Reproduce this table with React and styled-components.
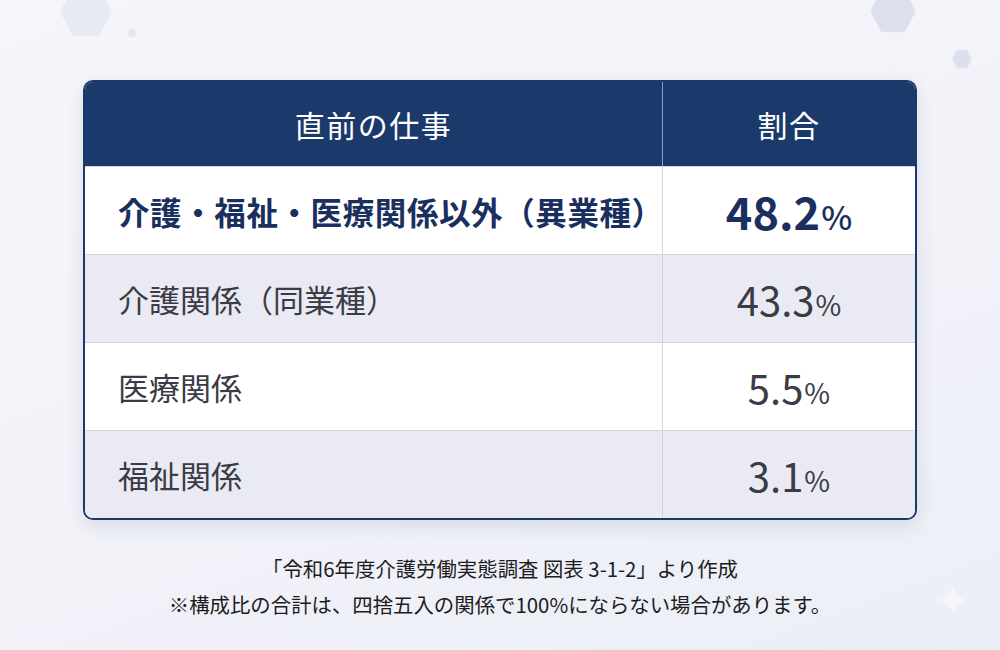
import styled, { createGlobalStyle } from 'styled-components';

const GlobalStyle = createGlobalStyle`
    html, body {
        margin: 0;
        padding: 0;
        width: 1000px;
        height: 650px;
        overflow: hidden;
    }
    body {
        font-family: "Noto Sans CJK JP", "Noto Sans", sans-serif;
        background: linear-gradient(160deg, #f6f6fa 0%, #f2f3f9 50%, #eceef6 100%);
    }
`;

const rows = [
    { label: '介護・福祉・医療関係以外（異業種）', value: '48.2', highlight: true },
    { label: '介護関係（同業種）', value: '43.3', shaded: true },
    { label: '医療関係', value: '5.5' },
    { label: '福祉関係', value: '3.1', shaded: true },
];

const App = () => {
    return (
        <Page>
            <GlobalStyle />
            <Blob $x={60} $y={-14} $size={52} $color="#e4e7f1" />
            <Blob $x={127} $y={28} $size={10} $color="#dfe1ea" />
            <Blob $x={870} $y={-12} $size={46} $color="#d9dcea" />
            <Blob $x={952} $y={49} $size={20} $color="#d8d9ec" />
            <Sparkle viewBox="0 0 40 40">
                <path d="M20 2 C22 14 26 18 38 20 C26 22 22 26 20 38 C18 26 14 22 2 20 C14 18 18 14 20 2 Z" fill="#f6f6fd" />
            </Sparkle>
            <Table>
                <HeadRow>
                    <HeadCell>直前の仕事</HeadCell>
                    <HeadCell $divider>割合</HeadCell>
                </HeadRow>
                {rows.map((row) => (
                    <Row key={row.label} $shaded={row.shaded}>
                        <Label $highlight={row.highlight}>{row.label}</Label>
                        <Value $highlight={row.highlight}>
                            {row.value}
                            <Percent $highlight={row.highlight}>%</Percent>
                        </Value>
                    </Row>
                ))}
            </Table>
            <Notes>
                <p>「令和6年度介護労働実態調査 図表 3-1-2」より作成</p>
                <p>※構成比の合計は、四捨五入の関係で100%にならない場合があります。</p>
            </Notes>
        </Page>
    );
};
export default App;


const Page = styled.div`
    position: relative;
    width: 1000px;
    height: 650px;
    padding-top: 80px;
    box-sizing: border-box;
    display: flex;
    flex-direction: column;
    align-items: center;
`;

const Blob = styled.div`
    position: absolute;
    left: ${(p) => p.$x}px;
    top: ${(p) => p.$y}px;
    width: ${(p) => p.$size}px;
    height: ${(p) => p.$size}px;
    background: ${(p) => p.$color};
    clip-path: polygon(25% 4%, 75% 4%, 100% 50%, 75% 96%, 25% 96%, 0 50%);
    filter: blur(2px);
    opacity: 0.85;
`;

const Sparkle = styled.svg`
    position: absolute;
    left: 935px;
    top: 582px;
    width: 36px;
    height: 36px;
    filter: blur(1px);
`;

const Table = styled.div`
    width: 834px;
    border: 2px solid #1b3a6b;
    border-radius: 10px;
    overflow: hidden;
    box-sizing: border-box;
    background: #fff;
    box-shadow: 0 6px 18px rgba(40, 50, 100, 0.12);
`;

const HeadRow = styled.div`
    display: grid;
    grid-template-columns: 577px 1fr;
    height: 84px;
    background: #1b3a6b;
`;

const HeadCell = styled.div`
    display: flex;
    align-items: center;
    justify-content: center;
    color: #fff;
    font-size: 30px;
    font-weight: 400;
    letter-spacing: 1.5px;
    border-left: ${(p) => (p.$divider ? '1px solid #7f9fd0' : 'none')};
`;

const Row = styled.div`
    display: grid;
    grid-template-columns: 577px 1fr;
    height: 88px;
    background: ${(p) => (p.$shaded ? '#e9eaf3' : '#ffffff')};
    border-top: 1px solid #d3d4de;
    box-sizing: border-box;
    &:first-of-type {
        border-top: none;
    }
`;

const Label = styled.div`
    display: flex;
    align-items: center;
    padding-left: 33px;
    font-size: ${(p) => (p.$highlight ? '31.5px' : '31px')};
    font-weight: ${(p) => (p.$highlight ? 700 : 400)};
    color: ${(p) => (p.$highlight ? '#1a2f5e' : '#3b3b45')};
    letter-spacing: ${(p) => (p.$highlight ? '0.6px' : '0')};
`;

const Value = styled.div`
    display: flex;
    align-items: baseline;
    justify-content: center;
    padding-top: ${(p) => (p.$highlight ? '19px' : '22px')};
    border-left: 1px solid #d3d4de;
    font-size: ${(p) => (p.$highlight ? '45px' : '40px')};
    font-weight: ${(p) => (p.$highlight ? 700 : 400)};
    color: ${(p) => (p.$highlight ? '#1a2f5e' : '#3b3b45')};
    line-height: 1.1;
`;

const Percent = styled.span`
    font-size: ${(p) => (p.$highlight ? '33px' : '28px')};
    font-weight: ${(p) => (p.$highlight ? 500 : 400)};
    margin-left: 1px;
`;

const Notes = styled.div`
    margin-top: 30px;
    text-align: center;
    color: #1c1c22;
    font-size: 20.4px;
    font-weight: 400;
    line-height: 36px;
    p {
        margin: 0;
    }
`;
